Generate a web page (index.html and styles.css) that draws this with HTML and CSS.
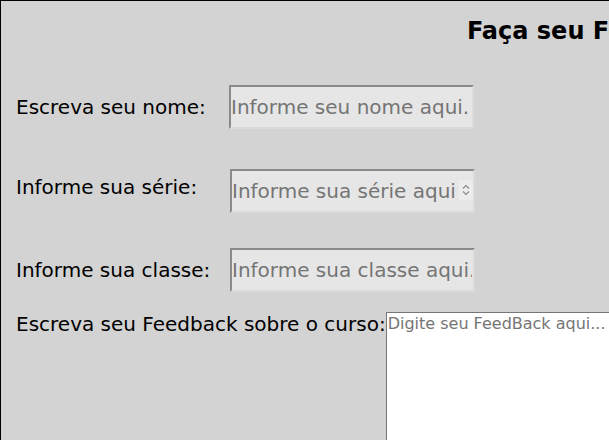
FILE: index.html
```html
<!DOCTYPE html>
<html lang="pt-BR">
<head>
<meta charset="utf-8">
<title>Feedback</title>
<link rel="stylesheet" href="styles.css">
</head>
<body>
<div class="page">
  <h1 class="title">Faça seu Feedback sobre o curso</h1>
  <form class="form">
    <div class="row row-1">
      <label class="label" for="nome">Escreva seu nome:</label>
      <input class="field" id="nome" type="text" placeholder="Informe seu nome aqui.">
    </div>
    <div class="row row-2">
      <label class="label" for="serie">Informe sua série:</label>
      <div class="num-wrap">
        <input class="field field-num" id="serie" type="number" placeholder="Informe sua série aqui">
        <span class="spin" aria-hidden="true">
          <svg width="14" height="20" viewBox="0 0 14 20">
            <path d="M4 8.5 L7 5.5 L10 8.5" fill="none" stroke="#8a8a8a" stroke-width="1.1"/>
            <path d="M4 11.5 L7 14.5 L10 11.5" fill="none" stroke="#8a8a8a" stroke-width="1.1"/>
          </svg>
        </span>
      </div>
    </div>
    <div class="row row-3">
      <label class="label" for="classe">Informe sua classe:</label>
      <input class="field" id="classe" type="text" placeholder="Informe sua classe aqui.">
    </div>
    <div class="row row-4">
      <label class="label-inline" for="fb">Escreva seu Feedback sobre o curso:</label>
      <textarea class="area" id="fb" placeholder="Digite seu FeedBack aqui..."></textarea>
    </div>
  </form>
</div>
</body>
</html>
```
FILE: styles.css
```css
html, body {
  margin: 0;
  padding: 0;
  background: #d3d3d3;
}
body {
  font-family: "DejaVu Sans", sans-serif;
  overflow: hidden;
}
.page {
  width: 1365px;
  min-height: 600px;
  border: 1px solid #000;
  background: #d3d3d3;
  padding-left: 15px;
  box-sizing: border-box;
}
.title {
  margin: 0;
  padding-top: 16px;
  font-size: 24px;
  font-weight: bold;
  text-align: center;
  line-height: 28px;
  color: #000;
}
.form {
  display: flex;
  flex-direction: column;
}
.row {
  display: flex;
  align-items: center;
}
.row-1 { margin-top: 40px; }
.row-2 { margin-top: 40px; }
.row-3 { margin-top: 35px; }
.row-4 { margin-top: 20px; align-items: flex-start; }
.label {
  width: 213px;
  font-size: 20px;
  color: #000;
}
.row-2 .label, .row-3 .label { width: 214px; }
.row-2 .label { position: relative; top: -4px; }
.label-inline {
  font-size: 20px;
  color: #000;
}
.field {
  width: 245px;
  height: 44px;
  box-sizing: border-box;
  margin: 0;
  padding: 0 1px 0 0;
  font-family: "DejaVu Sans", sans-serif;
  font-size: 20px;
  background: #e6e6e6;
  border-style: solid;
  border-width: 2px;
  border-color: #8a8a8a #dadada #dadada #8a8a8a;
  color: #000;
}
.field::placeholder {
  color: #757575;
}
.num-wrap {
  position: relative;
  display: flex;
}
.field-num {
  padding-right: 18px;
  -moz-appearance: textfield;
}
.field-num::-webkit-inner-spin-button,
.field-num::-webkit-outer-spin-button {
  -webkit-appearance: none;
  margin: 0;
}
.spin {
  position: absolute;
  right: 2px;
  top: 11px;
  width: 14px;
  height: 20px;
  background: #ececec;
  display: flex;
}
.area {
  width: 260px;
  height: 200px;
  margin: 0;
  box-sizing: border-box;
  padding: 1px 1px;
  font-family: "DejaVu Sans", sans-serif;
  font-size: 16px;
  background: #fff;
  border: 1px solid #767676;
  resize: none;
}
.area::placeholder {
  color: #757575;
}
```
